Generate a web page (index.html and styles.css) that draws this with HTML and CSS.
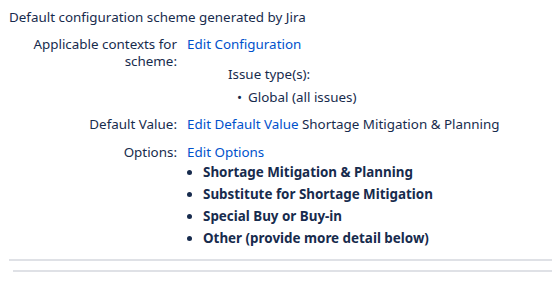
FILE: index.html
```html
<!DOCTYPE html>
<html lang="en">
<head>
  <meta charset="UTF-8">
  <title>Field configuration</title>
  <link rel="stylesheet" href="styles.css">
</head>
<body>
  <div class="scheme">
    <p class="description">Default configuration scheme generated by Jira</p>

    <div class="field">
      <div class="label">Applicable contexts for scheme:</div>
      <div class="value">
        <a href="#">Edit Configuration</a>
        <div class="contexts">
          <div class="ctx-title">Issue type(s):</div>
          <ul class="ctx-list">
            <li>Global (all issues)</li>
          </ul>
        </div>
      </div>
    </div>

    <div class="field">
      <div class="label">Default Value:</div>
      <div class="value"><a href="#">Edit Default Value</a> Shortage Mitigation &amp; Planning</div>
    </div>

    <div class="field last">
      <div class="label">Options:</div>
      <div class="value">
        <a href="#">Edit Options</a>
        <ul class="options">
          <li>Shortage Mitigation &amp; Planning</li>
          <li>Substitute for Shortage Mitigation</li>
          <li>Special Buy or Buy-in</li>
          <li>Other (provide more detail below)</li>
        </ul>
      </div>
    </div>

    <hr class="rule">
    <hr class="rule inner">
  </div>
</body>
</html>
```

FILE: styles.css
```css
body {
  margin: 0;
  background: #fff;
  color: #172b4d;
  font-family: "Segoe UI", "Noto Sans", "Open Sans", sans-serif;
  font-size: 13.4px;
  line-height: 17px;
}

a {
  color: #0052cc;
  text-decoration: none;
}

.scheme {
  padding: 9px 0 0 9px;
}

.description {
  margin: 0 0 10px;
}

.field {
  display: grid;
  grid-template-columns: 168px 1fr;
  column-gap: 10px;
  margin-bottom: 11px;
}

.field.last {
  margin-bottom: 7px;
}

.label {
  text-align: right;
}

.contexts {
  margin: 13px 0 0 41px;
}

.ctx-title {
  margin-bottom: 6px;
}

.ctx-list {
  margin: 0 0 -1px;
  padding-left: 20px;
  list-style: none;
}

.ctx-list li::before {
  content: "\2022";
  display: inline-block;
  width: 11px;
  margin-left: -11px;
}

.options {
  margin: 3px 0 0;
  padding-left: 16px;
  font-weight: bold;
}

.options li {
  margin-bottom: 5px;
}

.rule {
  height: 2px;
  margin: 0;
  border: 0;
  background: #dfe1e6;
}

.rule.inner {
  margin: 9px 0 0 4px;
}
```
